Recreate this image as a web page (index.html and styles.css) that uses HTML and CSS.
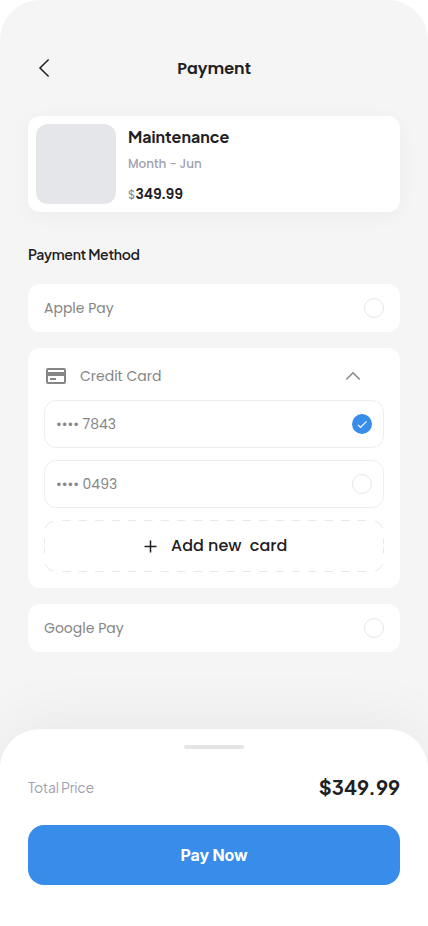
FILE: index.html
```html
<!DOCTYPE html>
<html lang="en">
<head>
<meta charset="utf-8">
<title>Payment</title>
<link rel="stylesheet" href="styles.css">
</head>
<body>
<div class="screen">
  <header class="topbar">
    <svg class="back" width="24" height="24" viewBox="0 0 24 24"><path d="M16.600 3.500 8 12l8.600 8.500"/></svg>
    <h1 class="title">Payment</h1>
  </header>
  <main class="content">
    <section class="item">
      <div class="thumb"></div>
      <div class="details">
        <h2 class="item-name">Maintenance</h2>
        <p class="item-period">Month - Jun</p>
        <p class="item-price"><span class="currency">$</span><span>349.99</span></p>
      </div>
    </section>
    <h2 class="section-title">Payment Method</h2>
    <div class="method"><span class="label">Apple Pay</span><i class="radio"></i></div>
    <section class="cards">
      <div class="cards-head">
        <svg class="card-icon" width="24" height="24" viewBox="0 0 24 24"><path fill-rule="evenodd" d="M4 4h16a2 2 0 0 1 2 2v12a2 2 0 0 1-2 2H4a2 2 0 0 1-2-2V6a2 2 0 0 1 2-2Zm0 2v2h16V6Zm0 6v6h16v-6Zm2 2h6v2H6Z"/></svg>
        <span class="label">Credit Card</span>
        <svg class="chevron" width="16" height="10" viewBox="0 0 16 10"><path d="m1.300 8.500 6.700-6.700 6.700 6.700"/></svg>
      </div>
      <div class="saved"><span class="dots">••••</span><span class="label">7843</span><i class="radio checked"><svg width="20" height="20" viewBox="0 0 20 20"><path d="m6 10.800 2.500 2.700 6-6.200"/></svg></i></div>
      <div class="saved"><span class="dots">••••</span><span class="label">0493</span><i class="radio neutral"></i></div>
      <div class="add">
        <svg class="dashes" width="340" height="52" viewBox="0 0 340 52">
          <path stroke-dasharray="8.300 8.100" d="M18.300.5h304M18.300 51.500h304"/>
          <path d="M1.300 8Q3.500 2.500 9 1M331 1q5.500 1.500 7.700 7M338.700 44q-2.200 5.500-7.700 7M9 51q-5.500-1.500-7.700-7M.5 18.300v6.200M.5 27v6.200M339.500 18.300v6.200M339.500 27v6.200"/>
        </svg>
        <svg class="plus" width="13" height="13" viewBox="0 0 13 13"><path d="M6.500.5v12M.5 6.500h12"/></svg>
        <span class="add-label">Add new&nbsp; card</span>
      </div>
    </section>
    <div class="method"><span class="label">Google Pay</span><i class="radio"></i></div>
  </main>
  <footer class="sheet">
    <div class="handle"></div>
    <div class="total"><span class="total-label">Total Price</span><span class="total-value">$349.99</span></div>
    <button class="pay">Pay Now</button>
  </footer>
</div>
</body>
</html>
```
FILE: styles.css
```css
* { box-sizing: border-box; margin: 0; padding: 0; }
body { background: #fff; font-family: Poppins, Inter, sans-serif; color: #1f2024; }
svg { display: block; fill: none; flex: none; }
.screen { height: 926px; display: flex; flex-direction: column; background: #f5f5f5; border-radius: 40px 40px 0 0; overflow: hidden; }
.topbar { height: 116px; padding: 56px 28px 0; display: grid; grid-template-columns: 32px 1fr 32px; align-items: start; }
.back { stroke: #1f2024; stroke-width: 1.5; margin-left: 4px; }
.title { margin-top: 1px; font-size: 16px; line-height: 24px; font-weight: 600; text-align: center; }
.content { flex: 1; padding: 0 28px; }
.item { height: 96px; padding: 8px; display: flex; gap: 12px; background: #fff; border-radius: 12px; box-shadow: 0 4px 20px rgba(0, 0, 0, .04); }
.thumb { width: 80px; height: 80px; border-radius: 12px; background: #e5e6ea; }
.item-name { font: 700 16px/26px "Plus Jakarta Sans", Inter, sans-serif; }
.item-period { margin-top: 4px; font-size: 12px; line-height: 20px; font-weight: 500; color: #a1a1b2; }
.item-price { margin-top: 10px; font-size: 14px; line-height: 20px; font-weight: 600; }
.currency { font-size: 12px; font-weight: 400; color: #888; }
.section-title { margin-top: 30px; font: 600 14px/24px "Plus Jakarta Sans", Inter, sans-serif; letter-spacing: -.28px; }
.method { height: 48px; padding: 0 16px; display: flex; align-items: center; justify-content: space-between; background: #fff; border-radius: 12px; margin-top: 18px; }
.label { font-size: 14px; line-height: 20px; color: #868686; }
.radio { width: 20px; height: 20px; border: 1px solid #e5e5ea; border-radius: 50%; }
.neutral { border-color: #e6e6e6; }
.checked { border: 0; background: #388cea; }
.checked svg { stroke: #fff; stroke-width: 1.2; }
.cards { height: 240px; margin-top: 16px; padding: 16px; display: flex; flex-direction: column; gap: 12px; background: #fff; border-radius: 12px; }
.cards + .method { margin-top: 16px; }
.cards-head { height: 24px; display: flex; align-items: center; }
.card-icon { fill: #868686; margin-right: 12px; }
.chevron { stroke: #868686; stroke-width: 1.5; margin: 0 23px 0 auto; }
.saved { height: 48px; padding: 0 11px; display: flex; align-items: center; border: 1px solid #eee; border-radius: 12px; }
.saved .radio { margin-left: auto; }
.dots { font-size: 14px; color: #868686; margin-right: 3.500px; }
.add { position: relative; height: 52px; display: flex; align-items: center; padding-left: 100px; gap: 14px; }
.dashes { position: absolute; inset: 0; stroke: #e8e8e8; stroke-width: 1; }
.plus { stroke: #1f2024; stroke-width: 1.5; }
.add-label { font-size: 16px; line-height: 24px; font-weight: 500; white-space: nowrap; }
.sheet { height: 197px; padding: 16px 28px 0; background: #fff; border-radius: 40px 40px 0 0; box-shadow: 0 -10px 60px rgba(0, 0, 0, .05); }
.handle { width: 60px; height: 4px; margin: 0 auto; border-radius: 2px; background: #e5e5e5; }
.total { height: 32px; margin-top: 22px; display: flex; align-items: center; justify-content: space-between; font-family: "Plus Jakarta Sans", Inter, sans-serif; }
.total-label { font-size: 14px; letter-spacing: -.2px; color: #a1a1b2; }
.total-value { padding-bottom: 2px; font-size: 20px; font-weight: 700; }
.pay { display: block; width: 100%; height: 60px; margin-top: 22px; border: 0; border-radius: 16px; background: #388cea; color: #fff; font: 700 16px/24px Inter, sans-serif; letter-spacing: -.15px; }
```
